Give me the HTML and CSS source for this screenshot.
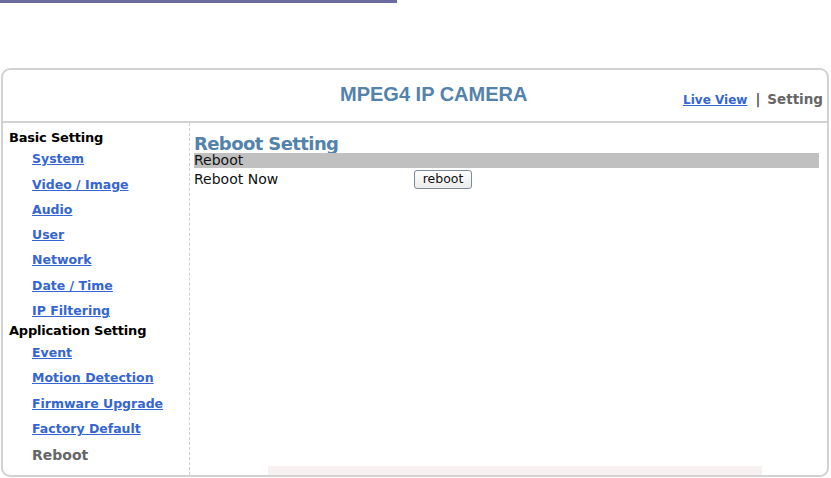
FILE: index.html
```html
<!DOCTYPE html>
<html>
<head>
<meta charset="utf-8">
<title>MPEG4 IP CAMERA</title>
<link rel="stylesheet" href="styles.css">
</head>
<body>
<div class="topbar"></div>
<div class="frame">
  <div class="header">
    <div class="title">MPEG4 IP CAMERA</div>
    <div class="nav"><a class="nav-link" href="#">Live View</a><span class="sep">|</span><span class="nav-current">Setting</span></div>
  </div>
  <div class="body">
    <div class="sidebar">
      <div class="group-title">Basic Setting</div>
      <ul class="menu">
        <li><a href="#">System</a></li>
        <li><a href="#">Video / Image</a></li>
        <li><a href="#">Audio</a></li>
        <li><a href="#">User</a></li>
        <li><a href="#">Network</a></li>
        <li><a href="#">Date / Time</a></li>
        <li><a href="#">IP Filtering</a></li>
      </ul>
      <div class="group-title">Application Setting</div>
      <ul class="menu">
        <li><a href="#">Event</a></li>
        <li><a href="#">Motion Detection</a></li>
        <li><a href="#">Firmware Upgrade</a></li>
        <li><a href="#">Factory Default</a></li>
        <li class="current">Reboot</li>
      </ul>
    </div>
    <div class="main">
      <div class="page-title">Reboot Setting</div>
      <div class="section-bar">Reboot</div>
      <div class="form-row">
        <span class="label">Reboot Now</span>
        <span><button class="btn" type="button">reboot</button></span>
      </div>
      <div class="strip"></div>
    </div>
  </div>
</div>
</body>
</html>
```
FILE: styles.css
```css
html, body {
  margin: 0;
  padding: 0;
  background: #ffffff;
}
body {
  font-family: "DejaVu Sans", Verdana, sans-serif;
  color: #000;
}
.topbar {
  width: 397px;
  height: 3px;
  background: #6b6ba0;
}
.frame {
  margin: 65px 0 0 1px;
  width: 824px;
  height: 405px;
  border: 2px solid #d2d2d2;
  border-radius: 9px;
  display: flex;
  flex-direction: column;
}
.header {
  height: 51px;
  border-bottom: 2px solid #d2d2d2;
  display: flex;
  align-items: flex-start;
}
.title {
  margin: 13px 0 0 337px;
  font-family: "Liberation Sans", Arial, sans-serif;
  font-weight: bold;
  font-size: 20px;
  line-height: 23px;
  color: #5382ab;
}
.nav {
  margin: 21px 4px 0 auto;
  font-size: 13.5px;
  line-height: 16px;
  font-weight: bold;
  display: flex;
  align-items: baseline;
}
.nav-link {
  font-size: 12px;
  color: #3465d2;
  text-decoration: underline;
}
.sep {
  color: #555;
  margin: 0 7px 0 8px;
  font-weight: bold;
}
.nav-current {
  color: #666;
}
.body {
  flex: 1;
  display: flex;
}
.sidebar {
  width: 180px;
  border-right: 1px dashed #d0d0d0;
  padding: 6.6px 0 0 6px;
}
.group-title {
  font-size: 13px;
  font-weight: bold;
  letter-spacing: -0.2px;
  line-height: 16.7px;
  height: 16.7px;
  white-space: nowrap;
}
.menu {
  list-style: none;
  margin: 0;
  padding: 0 0 0 23px;
}
.menu li {
  height: 25.3px;
  line-height: 25.3px;
  font-size: 12.5px;
  font-weight: bold;
  white-space: nowrap;
}
.menu a {
  color: #3465d2;
  text-decoration: underline;
}
.menu li.current {
  color: #666;
  font-size: 14px;
  height: 28px;
  line-height: 28px;
}
.main {
  flex: 1;
  display: flex;
  flex-direction: column;
  padding: 12px 8px 0 4px;
}
.page-title {
  font-size: 18px;
  font-weight: bold;
  letter-spacing: -0.6px;
  line-height: 18px;
  height: 18px;
  color: #5382ab;
}
.section-bar {
  background: #c0c0c0;
  height: 15px;
  line-height: 15px;
  font-size: 14px;
  color: #111;
}
.form-row {
  display: grid;
  grid-template-columns: 220px auto;
  align-items: center;
  padding-top: 1.5px;
  font-size: 14px;
  line-height: 19px;
  color: #111;
}
.btn {
  display: block;
  width: 58px;
  height: 19px;
  padding: 0;
  border: 1px solid #7d8a98;
  border-radius: 3px;
  background: linear-gradient(#ffffff, #ebebeb);
  font-family: "DejaVu Sans", Verdana, sans-serif;
  font-size: 12.5px;
  line-height: 16px;
  color: #111;
}
.strip {
  margin: auto 0 0 74px;
  width: 494px;
  height: 9px;
  background: #f7f1f1;
}
```
